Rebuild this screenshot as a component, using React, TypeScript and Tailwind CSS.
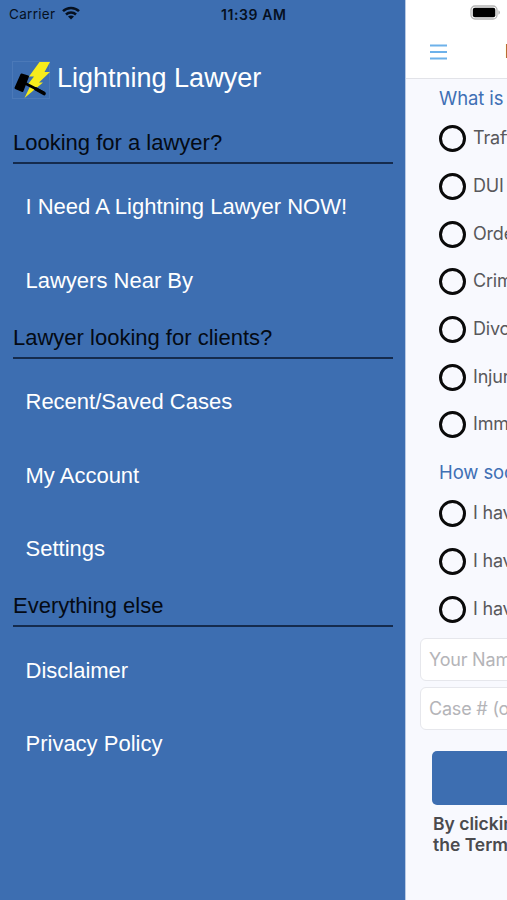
const MENU_SECTIONS = [
	{ title: "Looking for a lawyer?", items: ["I Need A Lightning Lawyer NOW!", "Lawyers Near By"] },
	{ title: "Lawyer looking for clients?", items: ["Recent/Saved Cases", "My Account", "Settings"] },
	{ title: "Everything else", items: ["Disclaimer", "Privacy Policy"] },
];

const CASE_TYPES = ["Traff", "DUI", "Orde", "Crim", "Divo", "Injur", "Imm"];
const URGENCY = ["I hav", "I hav", "I hav"];

function WifiIcon() {
	return (
		<svg width="18" height="14" viewBox="0 0 18 14" fill="none" stroke="#06101f" strokeWidth="2.5" className="-mt-[2px] shrink-0">
			<path d="M1 5.2C5.4.9 12.6.9 17 5.2" />
			<path d="M4 8.5c2.8-2.7 7.2-2.7 10 0" />
			<path d="M9 13.6 6 10.6c1.6-1.5 4.4-1.5 6 0z" fill="#06101f" stroke="none" />
		</svg>
	);
}

function Logo() {
	return (
		<svg width="38" height="38" viewBox="0 0 38 38" className="shrink-0">
			<rect x="0.5" y="0.5" width="37" height="37" fill="none" stroke="#4b79b8" />
			<path d="M27.5 1H38l-5.5 10H38L27 21.5h4L12.500 37l6-12.500H15l7-9h-5z" fill="#f7ec1c" />
			<path d="M9.500 13.500 16 15.500 10.500 30 3.500 27z" fill="#000" stroke="#000" strokeWidth="2" strokeLinejoin="round" />
			<path d="M13.500 22.500 32 32" stroke="#000" strokeWidth="2.600" strokeLinecap="round" />
			<path d="M24 28 32 32.500" stroke="#000" strokeWidth="3.600" strokeLinecap="round" />
		</svg>
	);
}

function RadioList({ options }: { options: string[] }) {
	return (
		<div>
			{options.map((label, i) => (
				<div key={i} className="flex h-[47.7px] items-center gap-[7px] pl-[33px]">
					<span className="size-[27px] shrink-0 rounded-full border-[3px] border-[#0a0a0a]" />
					<span className="-mt-[2px] text-[18px] tracking-[-0.2px] text-[#58585b]">{label}</span>
				</div>
			))}
		</div>
	);
}

export default function App() {
	return (
		<div className="flex h-[900px] w-[507px] overflow-hidden bg-[#f8f9fe]">
			{/* Drawer */}
			<aside className="flex w-[405px] shrink-0 flex-col bg-[#3d6eb1] font-['Liberation_Sans',sans-serif]">
				<div className="flex h-7 items-center pl-[9px] font-['Inter',sans-serif] text-[13.5px] text-[#06101f]">
					<span className="w-[53px] tracking-[0.3px]">Carrier</span>
					<WifiIcon />
					<span className="ml-[141px] whitespace-nowrap text-[14px] font-semibold tracking-[0.6px]">11:39 AM</span>
				</div>

				<div className="mt-[33px] flex h-[61px] items-start gap-[7px] pl-3">
					<Logo />
					<h1 className="text-[27px] leading-[34px] text-white">Lightning Lawyer</h1>
				</div>

				<nav>
					{MENU_SECTIONS.map((section) => (
						<section key={section.title}>
							<h2 className="ml-[13px] mr-3 h-[41.7px] border-b-2 border-[#152b4d] pt-2 text-[22px] leading-[26px] text-[#040a14]">
								{section.title}
							</h2>
							<div className="pt-[6.5px]">
								{section.items.map((item) => (
									<a key={item} className="flex h-[73.4px] items-center pl-[25.5px] text-[22px] text-white">
										{item}
									</a>
								))}
							</div>
						</section>
					))}
				</nav>
			</aside>

			{/* Page pushed to the right by the drawer */}
			<main className="w-[102px] shrink-0 overflow-hidden whitespace-nowrap border-l border-[#b9cae4] font-['Inter',sans-serif]">
				<header className="h-[79px] border-b border-[#e2e3e8] bg-white">
					<div className="flex h-[26px] items-center pl-[64px]">
						<svg width="31" height="16" viewBox="0 0 31 16" className="shrink-0">
							<rect x="1" y="1" width="26" height="13" rx="4" fill="#fff" stroke="#b5b5b5" strokeWidth="1.3" />
							<rect x="2.8" y="2.8" width="22.5" height="9.5" rx="2" fill="#000" />
							<path d="M28.500 5.300c1.800.8 1.800 3.700 0 4.500z" fill="#a5a5a5" />
						</svg>
					</div>
					<div className="flex h-[52px] items-center pl-6">
						<svg width="17" height="16" viewBox="0 0 17 16" stroke="#6db1ea" strokeWidth="2" className="shrink-0">
							<path d="M0 1.500h17M0 8h17M0 14.500h17" />
						</svg>
						<span className="ml-[58px] text-[19px] font-semibold text-[#222] antialiased">L</span>
					</div>
				</header>

				<h3 className="h-[36px] pl-[33px] pt-[7px] text-[18.5px] leading-6 tracking-[-0.1px] text-[#3f70b5]">What is</h3>
				<RadioList options={CASE_TYPES} />
				<h3 className="h-[41px] pl-[33px] pt-[11px] text-[18.5px] leading-6 tracking-[-0.1px] text-[#3f70b5]">How soo</h3>
				<RadioList options={URGENCY} />

				<div className="mt-[5px] space-y-[6px] pl-[14px] text-[18px] tracking-[-0.2px] text-[#b4b4b8]">
					<div className="flex h-[43px] w-[380px] items-center rounded-md border border-[#e6e7ec] bg-white pl-2">Your Nam</div>
					<div className="flex h-[43px] w-[380px] items-center rounded-md border border-[#e6e7ec] bg-white pl-2">Case # (o</div>
				</div>

				<button className="ml-[26px] mt-[21px] block h-[54px] w-[350px] rounded-[5px] bg-[#3d6eb1]" />
				<p className="ml-[27px] mt-2 text-[17.5px] font-semibold leading-[21.5px] text-[#4b4b4e]">
					By clickin
					<br />
					the Terms
				</p>
			</main>
		</div>
	);
}
